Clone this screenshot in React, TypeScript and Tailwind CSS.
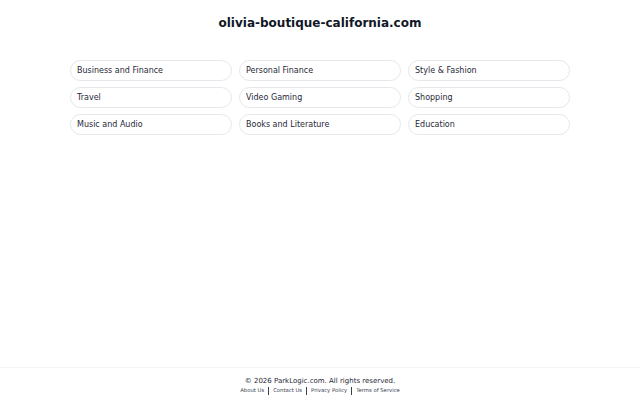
import React from 'react';

const categories = [
  'Business and Finance',
  'Personal Finance',
  'Style & Fashion',
  'Travel',
  'Video Gaming',
  'Shopping',
  'Music and Audio',
  'Books and Literature',
  'Education',
];

const links = ['About Us', 'Contact Us', 'Privacy Policy', 'Terms of Service'];

const App: React.FC = () => {
  return (
    <div className="flex min-h-[400px] flex-col bg-white font-['DejaVu_Sans',sans-serif] text-[#111827]">
      <main className="flex-1">
        <h1 className="pt-[14px] text-center text-[12px] font-bold leading-[18px]">
          olivia-boutique-california.com
        </h1>
        <div className="mx-auto mt-[28px] grid w-[500px] grid-cols-3 gap-x-[7px] gap-y-[6px]">
          {categories.map((c) => (
            <a
              key={c}
              href="#"
              className="flex h-[21px] items-center rounded-full border border-[#e5e7eb] px-[6px] text-[8px] text-[#1f2937]"
            >
              {c}
            </a>
          ))}
        </div>
      </main>
      <footer className="border-t border-[#f3f4f6] pb-[5px] pt-[8px] text-center">
        <p className="text-[7px] leading-[10px] text-[#1f2937]">
          © 2026 ParkLogic.com. All rights reserved.
        </p>
        <div className="flex items-center justify-center text-[5.3px] leading-[9px] text-[#374151]">
          {links.map((l, i) => (
            <React.Fragment key={l}>
              {i > 0 && <span className="mx-[4px] h-[8px] w-px bg-[#374151]" />}
              <a href="#">{l}</a>
            </React.Fragment>
          ))}
        </div>
      </footer>
    </div>
  );
};

export default App;
